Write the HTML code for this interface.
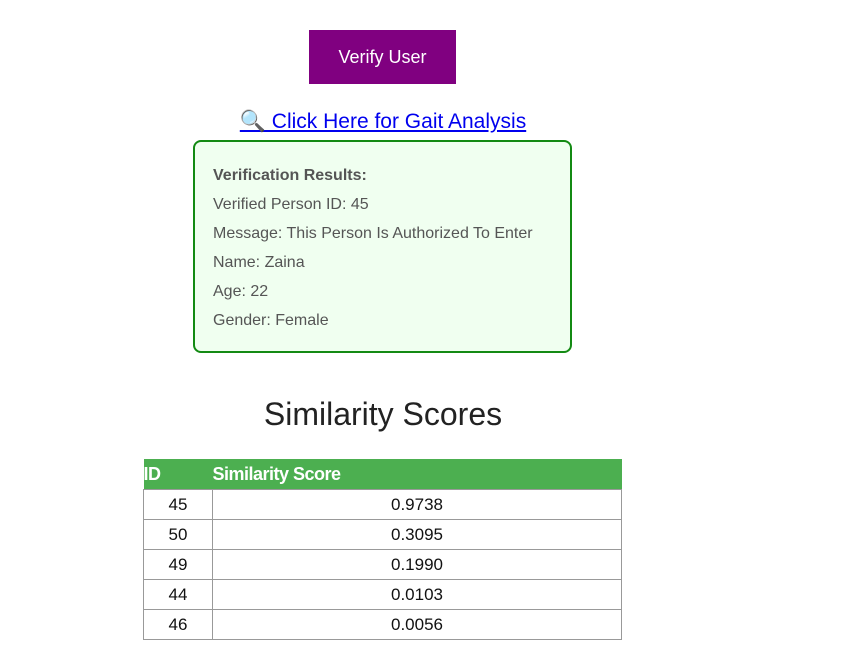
<!DOCTYPE html>
<html><head><meta charset="utf-8"><style>
body{margin:0;width:846px;height:649px;background:#fff;font-family:"Liberation Sans","DejaVu Sans",sans-serif;position:relative;overflow:hidden}
.btn{position:absolute;left:309px;top:30px;width:147px;height:54px;background:#800080;color:#fff;font-size:18px;display:flex;align-items:center;justify-content:center}
.link{position:absolute;left:0;width:766px;top:110px;text-align:center;font-size:21px;color:#0000ee;text-decoration:underline;white-space:nowrap}
.box{position:absolute;left:193px;top:140px;height:209px;border:2px solid #138a13;border-radius:8px;background:#f0fff0;width:375px}
.box div{position:absolute;left:18px;font-size:16px;color:#555;white-space:nowrap}
h2{position:absolute;left:0;width:766px;top:396px;margin:0;text-align:center;font-weight:normal;font-size:32px;color:#222}
table{position:absolute;left:143px;top:459px;border-collapse:collapse;width:479px}
th{background:#4caf50;color:#fff;text-align:left;height:30px;padding:0;font-size:18px;letter-spacing:-0.5px}
td{border:1px solid #999;height:29px;padding:0;text-align:center;font-size:17px;color:#111}
</style></head><body>
<div class="btn">Verify User</div>
<div class="link">🔍 Click Here for Gait Analysis</div>
<div class="box">
<div style="top:25px;font-weight:bold">Verification Results:</div>
<div style="top:54px">Verified Person ID: 45</div>
<div style="top:83px">Message: This Person Is Authorized To Enter</div>
<div style="top:112px">Name: Zaina</div>
<div style="top:141px">Age: 22</div>
<div style="top:170px">Gender: Female</div>
</div>
<h2>Similarity Scores</h2>
<table>
<tr><th style="width:69px">ID</th><th>Similarity Score</th></tr>
<tr><td>45</td><td>0.9738</td></tr>
<tr><td>50</td><td>0.3095</td></tr>
<tr><td>49</td><td>0.1990</td></tr>
<tr><td>44</td><td>0.0103</td></tr>
<tr><td>46</td><td>0.0056</td></tr>
</table>
</body></html>
